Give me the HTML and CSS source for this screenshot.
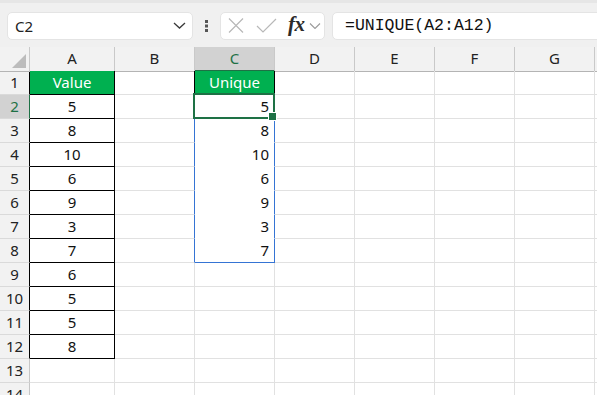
FILE: index.html
```html
<!DOCTYPE html>
<html lang="en">
<head>
    <meta charset="UTF-8">
    <title>UNIQUE</title>
    <link rel="stylesheet" href="styles.css">
</head>
<body>
    <div class="toolbar">
        <div class="name-box">
            <span>C2</span>
            <svg width="13" height="7" viewBox="0 0 13 7"><polyline points="1,1 6.5,6 12,1" fill="none" stroke="#3a3a3a" stroke-width="1.3"/></svg>
        </div>
        <svg class="dots" width="3" height="12" viewBox="0 0 3 12"><rect x="0" y="0" width="3" height="3" fill="#555"/><rect x="0" y="4.5" width="3" height="3" fill="#555"/><rect x="0" y="9" width="3" height="3" fill="#555"/></svg>
        <div class="fx-box">
            <svg width="16" height="15" viewBox="0 0 16 15"><path d="M1 0.5 L15 14.5 M15 0.5 L1 14.5" stroke="#b8b8b8" stroke-width="1.2" fill="none"/></svg>
            <svg width="21" height="15" viewBox="0 0 21 15"><polyline points="1,8 7,14 20,1" fill="none" stroke="#b8b8b8" stroke-width="1.2"/></svg>
            <span class="fx">fx</span>
            <svg width="12" height="6" viewBox="0 0 12 6"><polyline points="1,0.5 6,5.5 11,0.5" fill="none" stroke="#9a9a9a" stroke-width="1.1"/></svg>
        </div>
        <div class="formula">=UNIQUE(A2:A12)</div>
    </div>

    <div class="sheet">
        <div class="row head">
            <div class="corner"></div>
            <div class="ch">A</div><div class="ch">B</div><div class="ch sel">C</div><div class="ch">D</div>
            <div class="ch">E</div><div class="ch">F</div><div class="ch">G</div><div class="ch"></div>
        </div>
        <div class="row">
            <div class="rh bx-r">1</div>
            <div class="c fill bx">Value</div><div class="c bx-r"></div><div class="c fill bx">Unique</div>
            <div class="c"></div><div class="c"></div><div class="c"></div><div class="c"></div><div class="c"></div>
        </div>
        <div class="row">
            <div class="rh sel">2</div>
            <div class="c mid bx">5</div><div class="c sp-r"></div><div class="c num sp-r sp-in active">5</div>
            <div class="c"></div><div class="c"></div><div class="c"></div><div class="c"></div><div class="c"></div>
        </div>
        <div class="row">
            <div class="rh bx-r">3</div>
            <div class="c mid bx">8</div><div class="c sp-r"></div><div class="c num sp-r sp-in">8</div>
            <div class="c"></div><div class="c"></div><div class="c"></div><div class="c"></div><div class="c"></div>
        </div>
        <div class="row">
            <div class="rh bx-r">4</div>
            <div class="c mid bx">10</div><div class="c sp-r"></div><div class="c num sp-r sp-in">10</div>
            <div class="c"></div><div class="c"></div><div class="c"></div><div class="c"></div><div class="c"></div>
        </div>
        <div class="row">
            <div class="rh bx-r">5</div>
            <div class="c mid bx">6</div><div class="c sp-r"></div><div class="c num sp-r sp-in">6</div>
            <div class="c"></div><div class="c"></div><div class="c"></div><div class="c"></div><div class="c"></div>
        </div>
        <div class="row">
            <div class="rh bx-r">6</div>
            <div class="c mid bx">9</div><div class="c sp-r"></div><div class="c num sp-r sp-in">9</div>
            <div class="c"></div><div class="c"></div><div class="c"></div><div class="c"></div><div class="c"></div>
        </div>
        <div class="row">
            <div class="rh bx-r">7</div>
            <div class="c mid bx">3</div><div class="c sp-r"></div><div class="c num sp-r sp-in">3</div>
            <div class="c"></div><div class="c"></div><div class="c"></div><div class="c"></div><div class="c"></div>
        </div>
        <div class="row">
            <div class="rh bx-r">8</div>
            <div class="c mid bx">7</div><div class="c sp-r"></div><div class="c num sp-r sp-b">7</div>
            <div class="c"></div><div class="c"></div><div class="c"></div><div class="c"></div><div class="c"></div>
        </div>
        <div class="row">
            <div class="rh bx-r">9</div>
            <div class="c mid bx">6</div><div class="c"></div><div class="c"></div>
            <div class="c"></div><div class="c"></div><div class="c"></div><div class="c"></div><div class="c"></div>
        </div>
        <div class="row">
            <div class="rh bx-r">10</div>
            <div class="c mid bx">5</div><div class="c"></div><div class="c"></div>
            <div class="c"></div><div class="c"></div><div class="c"></div><div class="c"></div><div class="c"></div>
        </div>
        <div class="row">
            <div class="rh bx-r">11</div>
            <div class="c mid bx">5</div><div class="c"></div><div class="c"></div>
            <div class="c"></div><div class="c"></div><div class="c"></div><div class="c"></div><div class="c"></div>
        </div>
        <div class="row">
            <div class="rh bx-r">12</div>
            <div class="c mid bx">8</div><div class="c"></div><div class="c"></div>
            <div class="c"></div><div class="c"></div><div class="c"></div><div class="c"></div><div class="c"></div>
        </div>
        <div class="row">
            <div class="rh">13</div>
            <div class="c"></div><div class="c"></div><div class="c"></div>
            <div class="c"></div><div class="c"></div><div class="c"></div><div class="c"></div><div class="c"></div>
        </div>
        <div class="row">
            <div class="rh">14</div>
            <div class="c"></div><div class="c"></div><div class="c"></div>
            <div class="c"></div><div class="c"></div><div class="c"></div><div class="c"></div><div class="c"></div>
        </div>
    </div>
</body>
</html>
```

FILE: styles.css
```css
* {
    margin: 0;
    padding: 0;
    box-sizing: border-box;
}
body {
    width: 597px;
    height: 395px;
    overflow: hidden;
    background: #fff;
    font-family: "Noto Sans", "Open Sans", sans-serif;
    color: #111;
}

/* formula bar */
.toolbar {
    height: 47px;
    display: flex;
    align-items: center;
    padding: 1px 0 0 7px;
    background: #f0f0f0;
    border-top: 3px solid #e6e6e6;
    overflow: hidden;
}
.name-box, .fx-box, .formula {
    height: 28px;
    background: #fff;
    border: 1px solid #e4e4e4;
    border-radius: 5px;
    display: flex;
    align-items: center;
}
.name-box {
    width: 186px;
    padding: 0 6px 0 7px;
    justify-content: space-between;
    font-size: 15px;
    color: #222;
}
.dots {
    margin: 0 12px 0 12px;
}
.fx-box {
    width: 105px;
    padding-left: 7px;
}
.fx-box svg:nth-child(2) {
    margin-left: 12px;
}
.fx {
    font-family: "Liberation Serif", serif;
    font-style: italic;
    font-weight: bold;
    font-size: 21px;
    color: #2b2b2b;
    margin: 0 4px 2px 11px;
    letter-spacing: -0.5px;
}
.formula {
    flex: 1;
    min-width: 0;
    margin: 0 -20px 0 7px;
    padding-left: 12px;
    font-family: "Liberation Mono", monospace;
    font-size: 16.5px;
    color: #111;
}

/* grid */
.sheet {
    width: 597px;
    overflow: hidden;
}
.row {
    display: grid;
    grid-template-columns: 30px 85px repeat(7, 80px);
    height: 24px;
}
.row > div {
    border-right: 1px solid #e1e1e1;
    border-bottom: 1px solid #e1e1e1;
    font-size: 15px;
    line-height: 23px;
    white-space: nowrap;
}
.head > div {
    background: #f2f2f2;
    border-right-color: #c9c9c9;
    border-bottom-color: #b4b4b4;
    text-align: center;
    color: #222;
}
.corner {
    position: relative;
}
.corner::after {
    content: "";
    position: absolute;
    right: 3px;
    bottom: 3px;
    border-style: solid;
    border-width: 0 0 14px 14px;
    border-color: transparent transparent #bcbcbc transparent;
}
.row > .rh {
    background: #f2f2f2;
    border-right-color: #c6c6c6;
    border-bottom-color: #dadada;
    text-align: center;
    color: #222;
}
.head > .sel {
    background: #d2d2d2;
    color: #1e7145;
    border-bottom: 2px solid #1e7145;
}
.row > .rh.sel {
    background: #d2d2d2;
    color: #1e7145;
    border-right-color: #1e7145;
}

/* cell content */
.mid {
    text-align: center;
}
.num {
    text-align: right;
    padding-right: 5px;
}
.row > .fill {
    background: #00b050;
    color: #fff;
    text-align: center;
}

/* borders */
.row > .bx-r, .row > .rh.bx-r {
    border-right-color: #000;
}
.row > .bx {
    border-right-color: #000;
    border-bottom-color: #000;
}
.row > .sp-r {
    border-right-color: #3574d4;
}
.row > .sp-in {
    border-bottom-color: #fff;
}
.row > .sp-b {
    border-bottom-color: #3574d4;
}

/* active cell */
.active {
    position: relative;
}
.active::after {
    content: "";
    position: absolute;
    top: -2px;
    left: -2px;
    right: -1px;
    bottom: -1px;
    border: 2px solid #1e7145;
}
.active::before {
    content: "";
    position: absolute;
    right: -3px;
    bottom: -3px;
    width: 7px;
    height: 7px;
    background: #1e7145;
    border: 1px solid #fff;
    z-index: 1;
}
```
